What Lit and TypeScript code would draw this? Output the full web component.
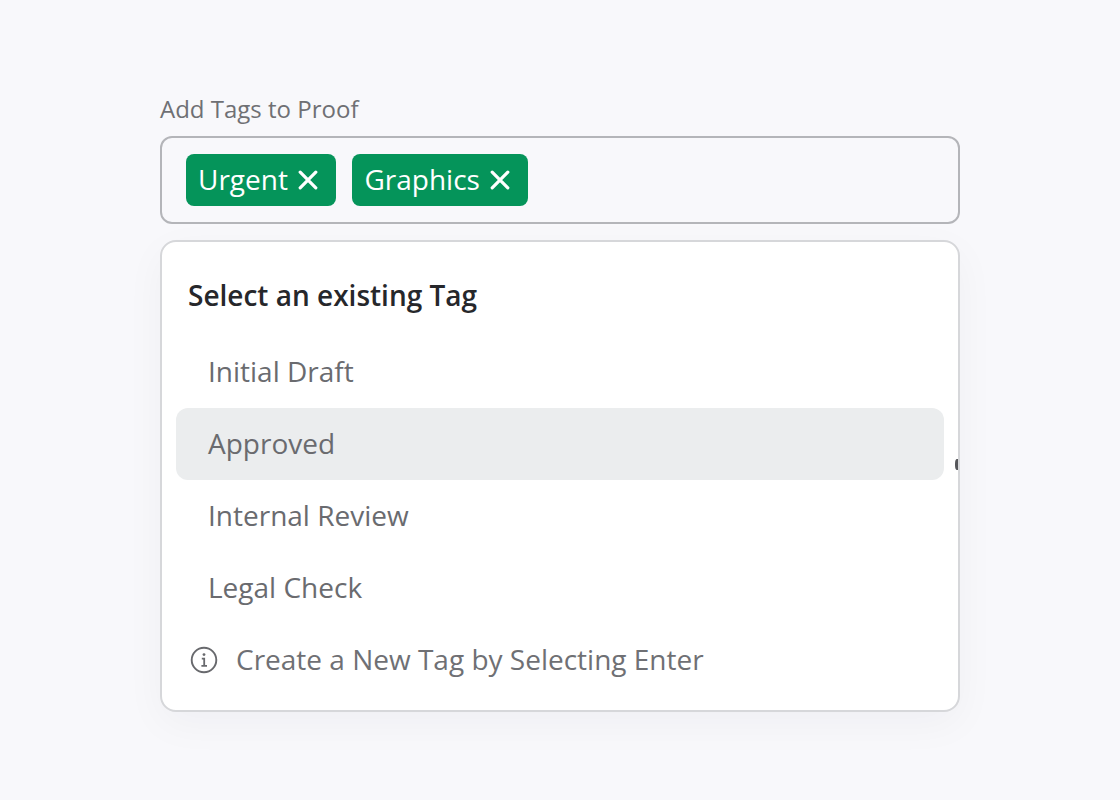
import { LitElement, html, css, svg } from "lit";
import { customElement } from "lit/decorators.js";

const closeIcon = svg`<path d="M2.2 2.2 L17.8 17.8 M17.8 2.2 L2.2 17.8" fill="none" stroke="currentColor" stroke-width="3.2" stroke-linecap="round"/>`;

@customElement("app-root")
export class AppRoot extends LitElement {
  static styles = css`
    :host {
      display: block;
      width: 1120px;
      height: 800px;
      box-sizing: border-box;
      background: #f8f8fb;
      padding: 91px 160px 0;
      font-family: "Open Sans", "Liberation Sans", sans-serif;
    }
    .label {
      font-size: 24px;
      line-height: 36px;
      color: #6f7074;
      margin-bottom: 9px;
      display: block;
    }
    .field {
      box-sizing: border-box;
      height: 88px;
      border: 2px solid #b4b5b9;
      border-radius: 12px;
      padding: 16px 24px;
      display: flex;
      gap: 16px;
    }
    .tag {
      height: 52px;
      box-sizing: border-box;
      background: #05945a;
      color: #fff;
      border-radius: 8px;
      padding: 0 18px 2px 12px;
      display: flex;
      align-items: center;
      gap: 10.5px;
      font-size: 28px;
      line-height: 50px;
    }
    .tag svg {
      width: 20px;
      height: 20px;
      display: block;
      position: relative;
      top: 1px;
    }
    .panel {
      position: relative;
      box-sizing: border-box;
      margin-top: 16px;
      height: 472px;
      background: #fff;
      border: 2px solid #d6d7da;
      border-radius: 16px;
      box-shadow: 0 12px 40px rgba(30, 35, 60, 0.04);
      padding: 29px 14px 0;
    }
    .title {
      font-size: 28px;
      font-weight: 600;
      line-height: 48px;
      color: #26272b;
      padding-left: 12px;
      margin-bottom: 17px;
    }
    .item {
      height: 72px;
      box-sizing: border-box;
      padding: 0 0 2px 32px;
      border-radius: 12px;
      display: flex;
      align-items: center;
      font-size: 28px;
      color: #6a6b6f;
    }
    .item.active {
      background: #ebedee;
    }
    .note {
      height: 72px;
      box-sizing: border-box;
      padding: 0 0 2px 13px;
      display: flex;
      align-items: center;
      gap: 17px;
      font-size: 28px;
      color: #6f7074;
    }
    .note svg {
      width: 30px;
      height: 30px;
      display: block;
      flex: none;
      color: #68696d;
      position: relative;
      top: 1px;
    }
    .thumb {
      position: absolute;
      right: 0;
      top: 217px;
      width: 3px;
      height: 11px;
      border-radius: 2px 0 0 2px / 5px 0 0 5px;
      background: #55565a;
    }
  `;

  render() {
    const items = ["Initial Draft", "Approved", "Internal Review", "Legal Check"];
    return html`
      <span class="label">Add Tags to Proof</span>
      <div class="field">
        ${["Urgent", "Graphics"].map(
          (t) => html`<div class="tag">${t}<svg viewBox="0 0 20 20">${closeIcon}</svg></div>`
        )}
      </div>
      <div class="panel">
        <div class="title">Select an existing Tag</div>
        ${items.map(
          (t) => html`<div class="item ${t === "Approved" ? "active" : ""}">${t}</div>`
        )}
        <div class="note">
          <svg viewBox="0 0 30 30" fill="none" stroke="currentColor">
            <circle cx="15" cy="15" r="12.3" stroke-width="1.9"/>
            <path d="M12.8 13.6 H15.2 V20.6 M12.4 20.8 H18" stroke-width="1.8"/>
            <circle cx="15" cy="9.6" r="1.4" fill="currentColor" stroke="none"/>
          </svg>
          <span>Create a New Tag by Selecting Enter</span>
        </div>
        <div class="thumb"></div>
      </div>
    `;
  }
}
